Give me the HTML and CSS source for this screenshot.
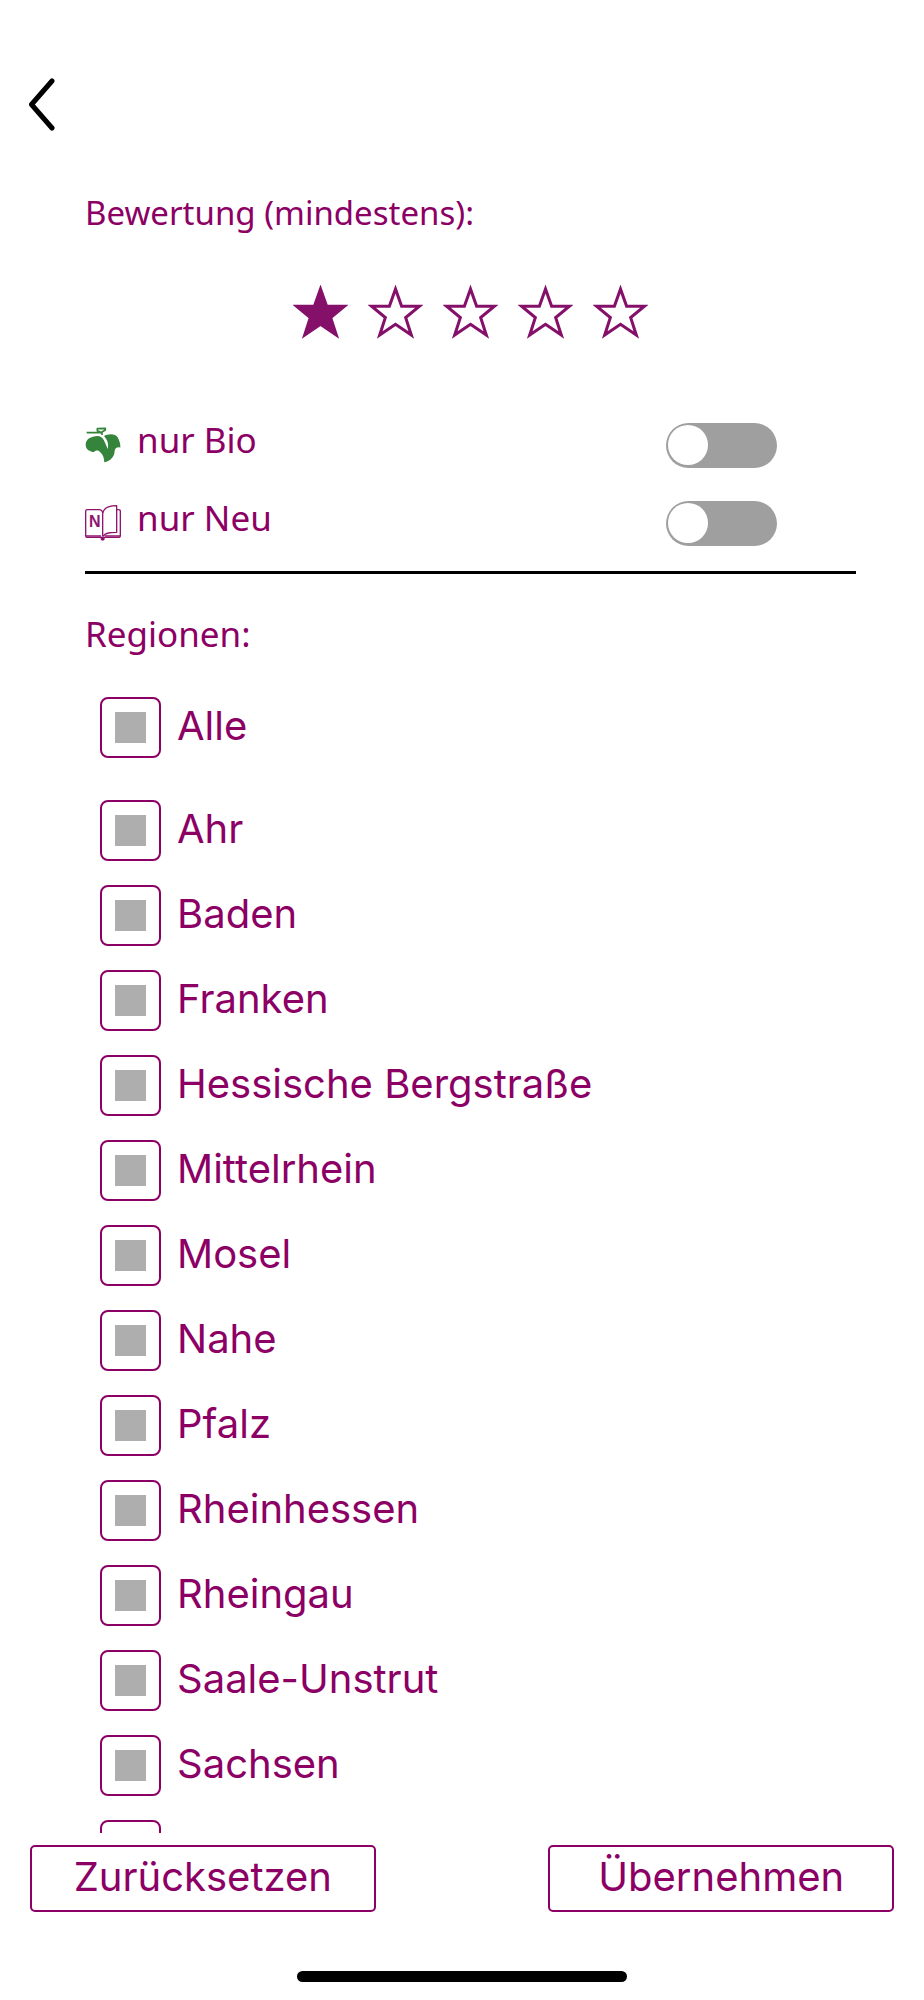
FILE: index.html
```html
<!DOCTYPE html>
<html lang="de">
<head>
<meta charset="utf-8">
<meta name="viewport" content="width=device-width, initial-scale=1">
<title>Filter</title>
<link rel="stylesheet" href="styles.css">
</head>
<body>
<svg class="defs" aria-hidden="true">
  <symbol id="star" viewBox="0 0 54 52">
    <path d="M27 3.500L33 20.300H50.500L37 31.500L42.500 48.500L27 38L11.500 48.500L17 31.500L3.500 20.300H21Z"/>
  </symbol>
</svg>
<form class="screen">
  <header class="topbar">
    <button class="back" type="button" aria-label="Zurück">
      <svg viewBox="0 0 26 54" width="26" height="54"><path d="M23 3L2.500 26.500L23 50" fill="none" stroke="#000" stroke-width="5" stroke-linecap="round" stroke-linejoin="round"/></svg>
    </button>
  </header>

  <main class="content">
    <h2 class="heading heading-small">Bewertung (mindestens):</h2>
    <div class="stars" role="radiogroup" aria-label="Bewertung">
      <label class="star star-on"><input type="radio" name="rating" value="1" aria-label="1 Stern" checked><svg><use href="#star"/></svg></label>
      <label class="star"><input type="radio" name="rating" value="2" aria-label="2 Sterne"><svg><use href="#star"/></svg></label>
      <label class="star"><input type="radio" name="rating" value="3" aria-label="3 Sterne"><svg><use href="#star"/></svg></label>
      <label class="star"><input type="radio" name="rating" value="4" aria-label="4 Sterne"><svg><use href="#star"/></svg></label>
      <label class="star"><input type="radio" name="rating" value="5" aria-label="5 Sterne"><svg><use href="#star"/></svg></label>
    </div>

    <div class="toggles">
      <div class="toggle">
        <svg class="icon" viewBox="0 0 108 108" aria-hidden="true">
          <path fill="#34853b" d="M2 53C2 36 18 28 38 27C49 27 56 36 60 47C64 56 69 64 66 68C71 62 70 51 67 43C64 35 60 31 57 27C67 21 91 18 98 31C103 41 107 51 106 62C97 59 90 63 89 72C88 89 77 102 58 106C57 92 54 82 45 75C38 68 32 71 28 74C24 76 19 75 16 72C7 70 2 62 2 53Z"/>
          <path fill="none" stroke="#34853b" stroke-width="5" stroke-linejoin="round" d="M5 17H53M52 18L37 11V5L61 4V9L51 15V24"/>
        </svg>
        <label for="bio">nur Bio</label>
        <input class="switch" id="bio" type="checkbox" role="switch">
      </div>
      <div class="toggle">
        <svg class="icon" viewBox="0 0 108 108" aria-hidden="true">
          <g fill="none" stroke="#8f1470" stroke-width="4" stroke-linejoin="round">
            <path d="M53 24C52 16 48 14 42 14H7Q2 14 2 19V93Q2 97 6 97H102Q106 97 106 93V19Q106 14 100 14H95"/>
            <path d="M53 94V28C54 12 66 2 95 2V82C70 82 58 84 55 94"/>
            <path d="M3 93H48M60 93H105"/>
            <path d="M48 97Q48 104 53 105Q58 104 58 97Z" fill="#8f1470"/>
          </g>
          <text class="icon-letter" x="12" y="65">N</text>
        </svg>
        <label for="neu">nur Neu</label>
        <input class="switch" id="neu" type="checkbox" role="switch">
      </div>
    </div>
    <hr class="rule">

    <h2 class="heading">Regionen:</h2>
    <div class="regions">
      <label class="region region-all"><input type="checkbox" name="alle"><span>Alle</span></label>
      <label class="region"><input type="checkbox" name="ahr"><span>Ahr</span></label>
      <label class="region"><input type="checkbox" name="baden"><span>Baden</span></label>
      <label class="region"><input type="checkbox" name="franken"><span>Franken</span></label>
      <label class="region"><input type="checkbox" name="bergstrasse"><span>Hessische Bergstraße</span></label>
      <label class="region"><input type="checkbox" name="mittelrhein"><span>Mittelrhein</span></label>
      <label class="region"><input type="checkbox" name="mosel"><span>Mosel</span></label>
      <label class="region"><input type="checkbox" name="nahe"><span>Nahe</span></label>
      <label class="region"><input type="checkbox" name="pfalz"><span>Pfalz</span></label>
      <label class="region"><input type="checkbox" name="rheinhessen"><span>Rheinhessen</span></label>
      <label class="region"><input type="checkbox" name="rheingau"><span>Rheingau</span></label>
      <label class="region"><input type="checkbox" name="saale"><span>Saale-Unstrut</span></label>
      <label class="region"><input type="checkbox" name="sachsen"><span>Sachsen</span></label>
      <label class="region"><input type="checkbox" name="weitere" aria-label="Weitere Region"></label>
    </div>
  </main>

  <footer class="footer">
    <div class="actions">
      <button class="action" type="reset">Zurücksetzen</button>
      <button class="action" type="button">Übernehmen</button>
    </div>
    <div class="home-bar"></div>
  </footer>
</form>
</body>
</html>
```

FILE: styles.css
```css
:root {
  --wine: #8c0065;
  --grey: #9f9f9f;
}

* {
  box-sizing: border-box;
}

body {
  margin: 0;
  background: #fff;
  color: var(--wine);
  font-family: "Noto Sans", "Open Sans", sans-serif;
}

.defs {
  display: none;
}

.screen {
  display: flex;
  flex-direction: column;
  height: 100vh;
}

.topbar {
  padding: 78px 29px 57px;
}

.back {
  display: block;
  padding: 0;
  border: 0;
  background: none;
}

.back svg {
  display: block;
}

.content {
  flex: 1;
  min-height: 0;
  padding: 0 68px 0 85px;
  overflow-y: auto;
  scrollbar-width: none;
}

.heading {
  margin: 0;
  font-size: 35px;
  font-weight: 400;
  line-height: 48px;
}

.heading-small {
  font-size: 33px;
}

.stars {
  display: flex;
  justify-content: center;
  gap: 20px;
  padding: 48px 0 83px;
}

.star {
  display: block;
  position: relative;
}

.star input {
  position: absolute;
  inset: 0;
  margin: 0;
  opacity: 0;
}

.star svg {
  display: block;
  width: 55px;
  height: 54px;
  fill: none;
  stroke: #85106a;
  stroke-width: 3;
}

.star-on svg {
  fill: #85106a;
}

.toggles {
  display: grid;
  gap: 32px;
  padding-right: 79px;
}

.toggle {
  display: flex;
  align-items: center;
  gap: 16px;
  height: 46px;
  font-size: 35px;
  line-height: 36px;
}

.toggle label {
  flex: 1;
  padding-bottom: 10px;
}

.icon {
  width: 36px;
  height: 36px;
}

.icon-letter {
  fill: #8f1470;
  font-family: "Liberation Sans", sans-serif;
  font-size: 48px;
  font-weight: 700;
}

.switch {
  appearance: none;
  width: 111px;
  height: 45px;
  margin: 0;
  border-radius: 23px;
  background: var(--grey);
}

.switch::before {
  content: "";
  display: block;
  width: 40px;
  height: 40px;
  margin: 2px;
  border-radius: 50%;
  background: #fff;
}

.rule {
  height: 3px;
  margin: 25px 0 36px;
  border: 0;
  background: #000;
}

.regions {
  display: flex;
  flex-direction: column;
  align-items: flex-start;
  gap: 24px;
  padding: 39px 15px 24px;
}

.region {
  display: flex;
  align-items: center;
  gap: 16px;
  font-family: Inter, sans-serif;
  font-size: 40px;
  line-height: 48px;
}

.region-all {
  margin-bottom: 18px;
}

.region input {
  appearance: none;
  width: 61px;
  height: 61px;
  margin: 0;
  border: 2px solid var(--wine);
  border-radius: 8px;
  background: linear-gradient(#aeaeae, #aeaeae) center / 31px 31px no-repeat;
}

.region span {
  padding-bottom: 3px;
}

.footer {
  padding: 12px 30px 18px;
}

.actions {
  display: flex;
  justify-content: space-between;
}

.action {
  width: 40%;
  height: 67px;
  padding: 0 0 3px;
  border: 2px solid var(--wine);
  border-radius: 5px;
  background: #fff;
  color: var(--wine);
  font-family: Inter, sans-serif;
  font-size: 40px;
  line-height: 48px;
}

.home-bar {
  width: 330px;
  height: 11px;
  margin: 59px auto 0;
  border-radius: 6px;
  background: #000;
}
```
